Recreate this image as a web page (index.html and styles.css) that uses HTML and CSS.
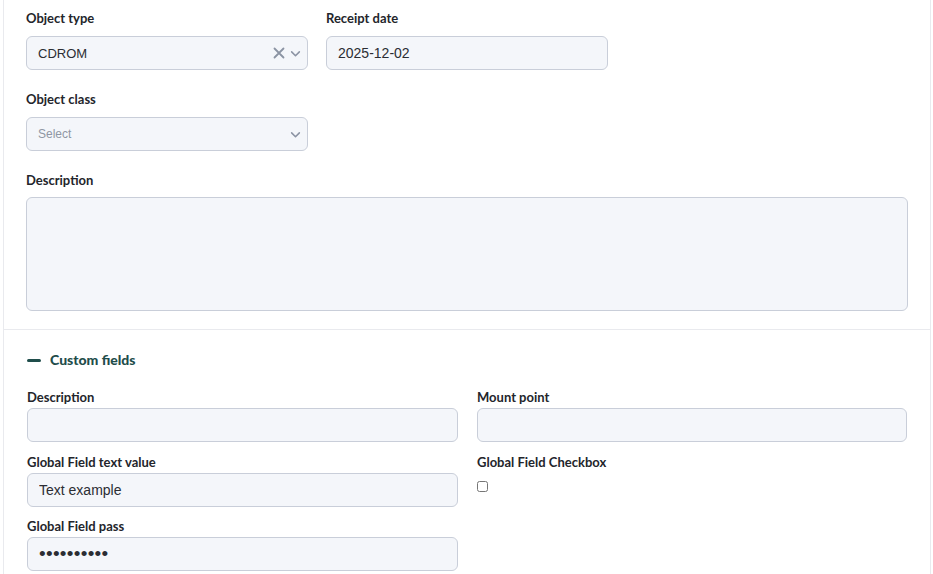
FILE: index.html
```html
<!DOCTYPE html>
<html lang="en">
<head>
    <meta charset="UTF-8">
    <title>Object details</title>
    <link rel="stylesheet" href="styles.css">
</head>
<body>
    <div class="card">
        <div class="section main">
            <div class="row">
                <div class="field half">
                    <label class="label">Object type</label>
                    <div class="select">
                        <span class="value">CDROM</span>
                        <span class="icons">
                            <svg width="12" height="12" viewBox="0 0 12 12"><path d="M1.5 1.5 L10.5 10.5 M10.5 1.5 L1.5 10.5" stroke="#8b93a3" stroke-width="1.8" stroke-linecap="round"/></svg>
                            <svg width="11" height="11" viewBox="0 0 10 10"><path d="M1.5 3.5 L5 7 L8.5 3.5" fill="none" stroke="#8b93a3" stroke-width="1.4" stroke-linecap="round" stroke-linejoin="round"/></svg>
                        </span>
                    </div>
                </div>
                <div class="field half">
                    <label class="label">Receipt date</label>
                    <input class="input date" type="text" value="2025-12-02">
                </div>
            </div>
            <div class="field half">
                <label class="label">Object class</label>
                <div class="select">
                    <span class="placeholder">Select</span>
                    <span class="icons">
                        <svg width="11" height="11" viewBox="0 0 10 10"><path d="M1.5 3.5 L5 7 L8.5 3.5" fill="none" stroke="#8b93a3" stroke-width="1.4" stroke-linecap="round" stroke-linejoin="round"/></svg>
                    </span>
                </div>
            </div>
            <div class="field">
                <label class="label">Description</label>
                <textarea class="textarea"></textarea>
            </div>
        </div>

        <div class="section custom">
            <div class="custom-head">
                <span class="minus"></span>
                <span>Custom fields</span>
            </div>
            <div class="grid">
                <div class="cfield">
                    <label class="label">Description</label>
                    <input class="input" type="text">
                </div>
                <div class="cfield">
                    <label class="label">Mount point</label>
                    <input class="input" type="text">
                </div>
                <div class="cfield">
                    <label class="label">Global Field text value</label>
                    <input class="input" type="text" value="Text example">
                </div>
                <div class="cfield">
                    <label class="label">Global Field Checkbox</label>
                    <input class="check" type="checkbox">
                </div>
                <div class="cfield">
                    <label class="label">Global Field pass</label>
                    <input class="input pass" type="password" value="secret1234">
                </div>
            </div>
        </div>
    </div>
</body>
</html>
```

FILE: styles.css
```css
body {
    margin: 0;
    background: #ffffff;
    font-family: Lato, "Liberation Sans", sans-serif;
    color: #23252b;
}
.card {
    margin-left: 3px;
    width: 926px;
    min-height: 574px;
    border-left: 1px solid #e9eaee;
    border-right: 1px solid #e9eaee;
}
.section.main {
    padding: 10px 22px 18px 22px;
    border-bottom: 1px solid #e9eaee;
}
.row {
    display: flex;
    gap: 18px;
}
.field {
    margin-bottom: 21px;
}
.field:last-child {
    margin-bottom: 0;
}
.half {
    width: 282px;
}
.label {
    display: block;
    font-size: 13px;
    font-weight: 700;
    line-height: 16px;
    margin-bottom: 10px;
    color: #23252b;
}
.select,
.input,
.textarea {
    box-sizing: border-box;
    width: 100%;
    height: 34px;
    background: #f4f6fa;
    border: 1px solid #c9ced9;
    border-radius: 6px;
    font-family: "Liberation Sans", Arial, sans-serif;
    font-size: 14px;
    color: #2b2d33;
    outline: none;
}
.select {
    display: flex;
    align-items: center;
    justify-content: space-between;
    padding: 0 6px 0 11px;
}
.select .value {
    font-size: 13px;
}
.select .placeholder {
    font-size: 12px;
    color: #8f96a3;
}
.icons {
    display: flex;
    align-items: center;
    gap: 5px;
}
.icons svg {
    display: block;
}
.input {
    padding: 0 11px;
}
.textarea {
    display: block;
    height: 114px;
    resize: none;
    margin-top: -1px;
}
.section.custom {
    padding: 22px 23px 0 23px;
}
.custom-head {
    display: flex;
    align-items: center;
    gap: 9px;
    font-size: 14px;
    font-weight: 900;
    line-height: 16px;
    color: #1f4d4b;
    margin-bottom: 21px;
}
.minus {
    width: 14px;
    height: 3px;
    border-radius: 2px;
    background: #1f4d4b;
}
.grid {
    display: grid;
    grid-template-columns: 431px 430px;
    column-gap: 19px;
    row-gap: 11.5px;
}
.cfield .label {
    margin-bottom: 3px;
}
.pass {
    letter-spacing: 0.3px;
    font-size: 19px;
}
.check {
    width: 11px;
    height: 11px;
    margin: 8px 0 0 0;
}
```
